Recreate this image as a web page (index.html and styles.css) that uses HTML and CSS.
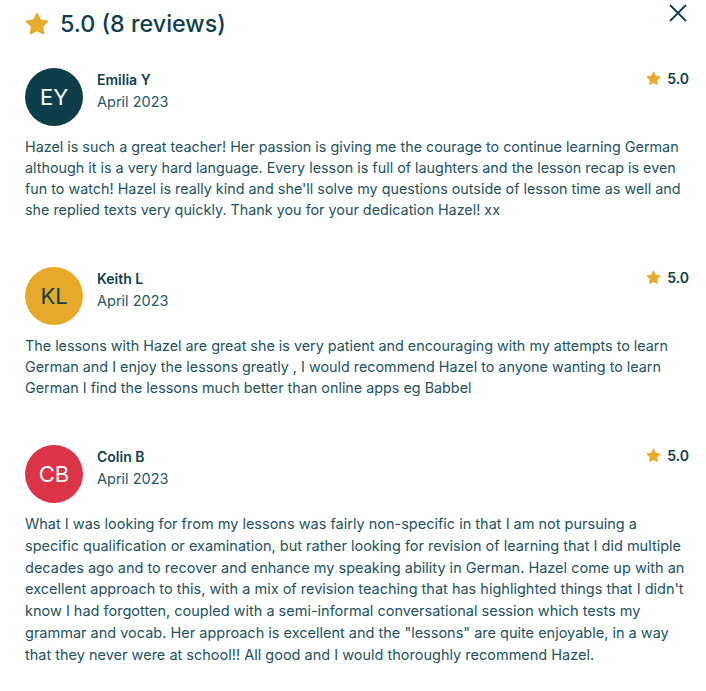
FILE: index.html
```html
<!DOCTYPE html>
<html lang="en">
<head>
<meta charset="utf-8">
<title>Reviews</title>
<link rel="stylesheet" href="styles.css">
</head>
<body>
<div class="panel">
  <header class="head">
    <div class="total">
      <svg class="star-lg" viewBox="0 0 24 24" aria-hidden="true"><path d="M12 2.6c.4 0 .7.2.9.6l2.4 4.9 5.4.8c.8.1 1.1 1.1.5 1.6l-3.9 3.8.9 5.4c.1.8-.7 1.4-1.4 1l-4.8-2.5-4.8 2.5c-.7.4-1.6-.2-1.4-1l.9-5.4-3.9-3.8c-.6-.6-.3-1.5.5-1.6l5.4-.8 2.4-4.9c.2-.4.5-.6.9-.6z"/></svg>
      <span>5.0 (8 reviews)</span>
    </div>
    <button class="close" aria-label="Close">
      <svg viewBox="0 0 20 20"><path d="M2 2L18 18M18 2L2 18"/></svg>
    </button>
  </header>

  <article class="review">
    <div class="meta">
      <div class="avatar av-teal">EY</div>
      <div class="who">
        <div class="name">Emilia Y</div>
        <div class="date">April 2023</div>
      </div>
      <div class="rating">
        <svg class="star-sm" viewBox="0 0 24 24"><path d="M12 2.6c.4 0 .7.2.9.6l2.4 4.9 5.4.8c.8.1 1.1 1.1.5 1.6l-3.9 3.8.9 5.4c.1.8-.7 1.4-1.4 1l-4.8-2.5-4.8 2.5c-.7.4-1.6-.2-1.4-1l.9-5.4-3.9-3.8c-.6-.6-.3-1.5.5-1.6l5.4-.8 2.4-4.9c.2-.4.5-.6.9-.6z"/></svg>
        <span>5.0</span>
      </div>
    </div>
    <p class="text">Hazel is such a great teacher! Her passion is giving me the courage to continue learning German although it is a very hard language. Every lesson is full of laughters and the lesson recap is even fun to watch! Hazel is really kind and she'll solve my questions outside of lesson time as well and she replied texts very quickly. Thank you for your dedication Hazel! xx</p>
  </article>

  <article class="review">
    <div class="meta">
      <div class="avatar av-yellow">KL</div>
      <div class="who">
        <div class="name">Keith L</div>
        <div class="date">April 2023</div>
      </div>
      <div class="rating">
        <svg class="star-sm" viewBox="0 0 24 24"><path d="M12 2.6c.4 0 .7.2.9.6l2.4 4.9 5.4.8c.8.1 1.1 1.1.5 1.6l-3.9 3.8.9 5.4c.1.8-.7 1.4-1.4 1l-4.8-2.5-4.8 2.5c-.7.4-1.6-.2-1.4-1l.9-5.4-3.9-3.8c-.6-.6-.3-1.5.5-1.6l5.4-.8 2.4-4.9c.2-.4.5-.6.9-.6z"/></svg>
        <span>5.0</span>
      </div>
    </div>
    <p class="text">The lessons with Hazel are great she is very patient and encouraging with my attempts to learn German and I enjoy the lessons greatly , I would recommend Hazel to anyone wanting to learn German I find the lessons much better than online apps eg Babbel</p>
  </article>

  <article class="review">
    <div class="meta">
      <div class="avatar av-red">CB</div>
      <div class="who">
        <div class="name">Colin B</div>
        <div class="date">April 2023</div>
      </div>
      <div class="rating">
        <svg class="star-sm" viewBox="0 0 24 24"><path d="M12 2.6c.4 0 .7.2.9.6l2.4 4.9 5.4.8c.8.1 1.1 1.1.5 1.6l-3.9 3.8.9 5.4c.1.8-.7 1.4-1.4 1l-4.8-2.5-4.8 2.5c-.7.4-1.6-.2-1.4-1l.9-5.4-3.9-3.8c-.6-.6-.3-1.5.5-1.6l5.4-.8 2.4-4.9c.2-.4.5-.6.9-.6z"/></svg>
        <span>5.0</span>
      </div>
    </div>
    <p class="text text-long">What I was looking for from my lessons was fairly non-specific in that I am not pursuing a specific qualification or examination, but rather looking for revision of learning that I did multiple decades ago and to recover and enhance my speaking ability in German. Hazel come up with an excellent approach to this, with a mix of revision teaching that has highlighted things that I didn't know I had forgotten, coupled with a semi-informal conversational session which tests my grammar and vocab. Her approach is excellent and the "lessons" are quite enjoyable, in a way that they never were at school!! All good and I would thoroughly recommend Hazel.</p>
  </article>
</div>
</body>
</html>
```

FILE: styles.css
```css
* { box-sizing: border-box; }
html, body { margin: 0; padding: 0; background: #ffffff; }
body {
  font-family: Inter, "Noto Sans", sans-serif;
  color: #1b4a56;
}
.panel {
  width: 706px;
  padding: 0 17px 0 25px;
}
.head {
  display: flex;
  justify-content: space-between;
  align-items: flex-start;
  height: 68px;
}
.total {
  display: flex;
  align-items: center;
  gap: 9px;
  margin-top: 9px;
  font-size: 23.3px;
  font-weight: 500;
  color: #0f3f4b;
}
.star-lg { width: 28px; height: 28px; fill: #e9ab2b; margin-left: -2px; }
.close {
  border: 0;
  background: none;
  padding: 0;
  margin-top: 3px;
  margin-right: 1px;
  width: 20px;
  height: 20px;
  cursor: pointer;
}
.close svg { width: 20px; height: 20px; stroke: #0f3f4b; stroke-width: 1.8; fill: none; }

.review { margin-bottom: 47px; }
.meta {
  display: flex;
  align-items: flex-start;
  gap: 14px;
}
.avatar {
  width: 58px;
  height: 58px;
  border-radius: 50%;
  display: flex;
  align-items: center;
  justify-content: center;
  font-size: 22px;
  font-weight: 400;
  flex-shrink: 0;
}
.av-teal { background: #0d3f4b; color: #ffffff; }
.av-yellow { background: #e6aa2a; color: #123f4a; }
.av-red { background: #dc3447; color: #ffffff; }
.who { flex: 1; padding-top: 2px; }
.name { font-size: 14px; font-weight: 600; color: #123f4a; line-height: 20px; }
.date { font-size: 14.5px; color: #2a5763; line-height: 20px; margin-top: 2px; }
.rating {
  display: flex;
  align-items: center;
  gap: 5px;
  font-size: 14px;
  font-weight: 600;
  color: #123f4a;
  padding-top: 2px;
}
.star-sm { width: 17px; height: 17px; fill: #e9ab2b; }
.text {
  margin: 10px 0 0;
  font-size: 14.35px;
  line-height: 21px;
  color: #24525e;
}
.text-long { font-size: 14.5px; line-height: 21.8px; }
```
